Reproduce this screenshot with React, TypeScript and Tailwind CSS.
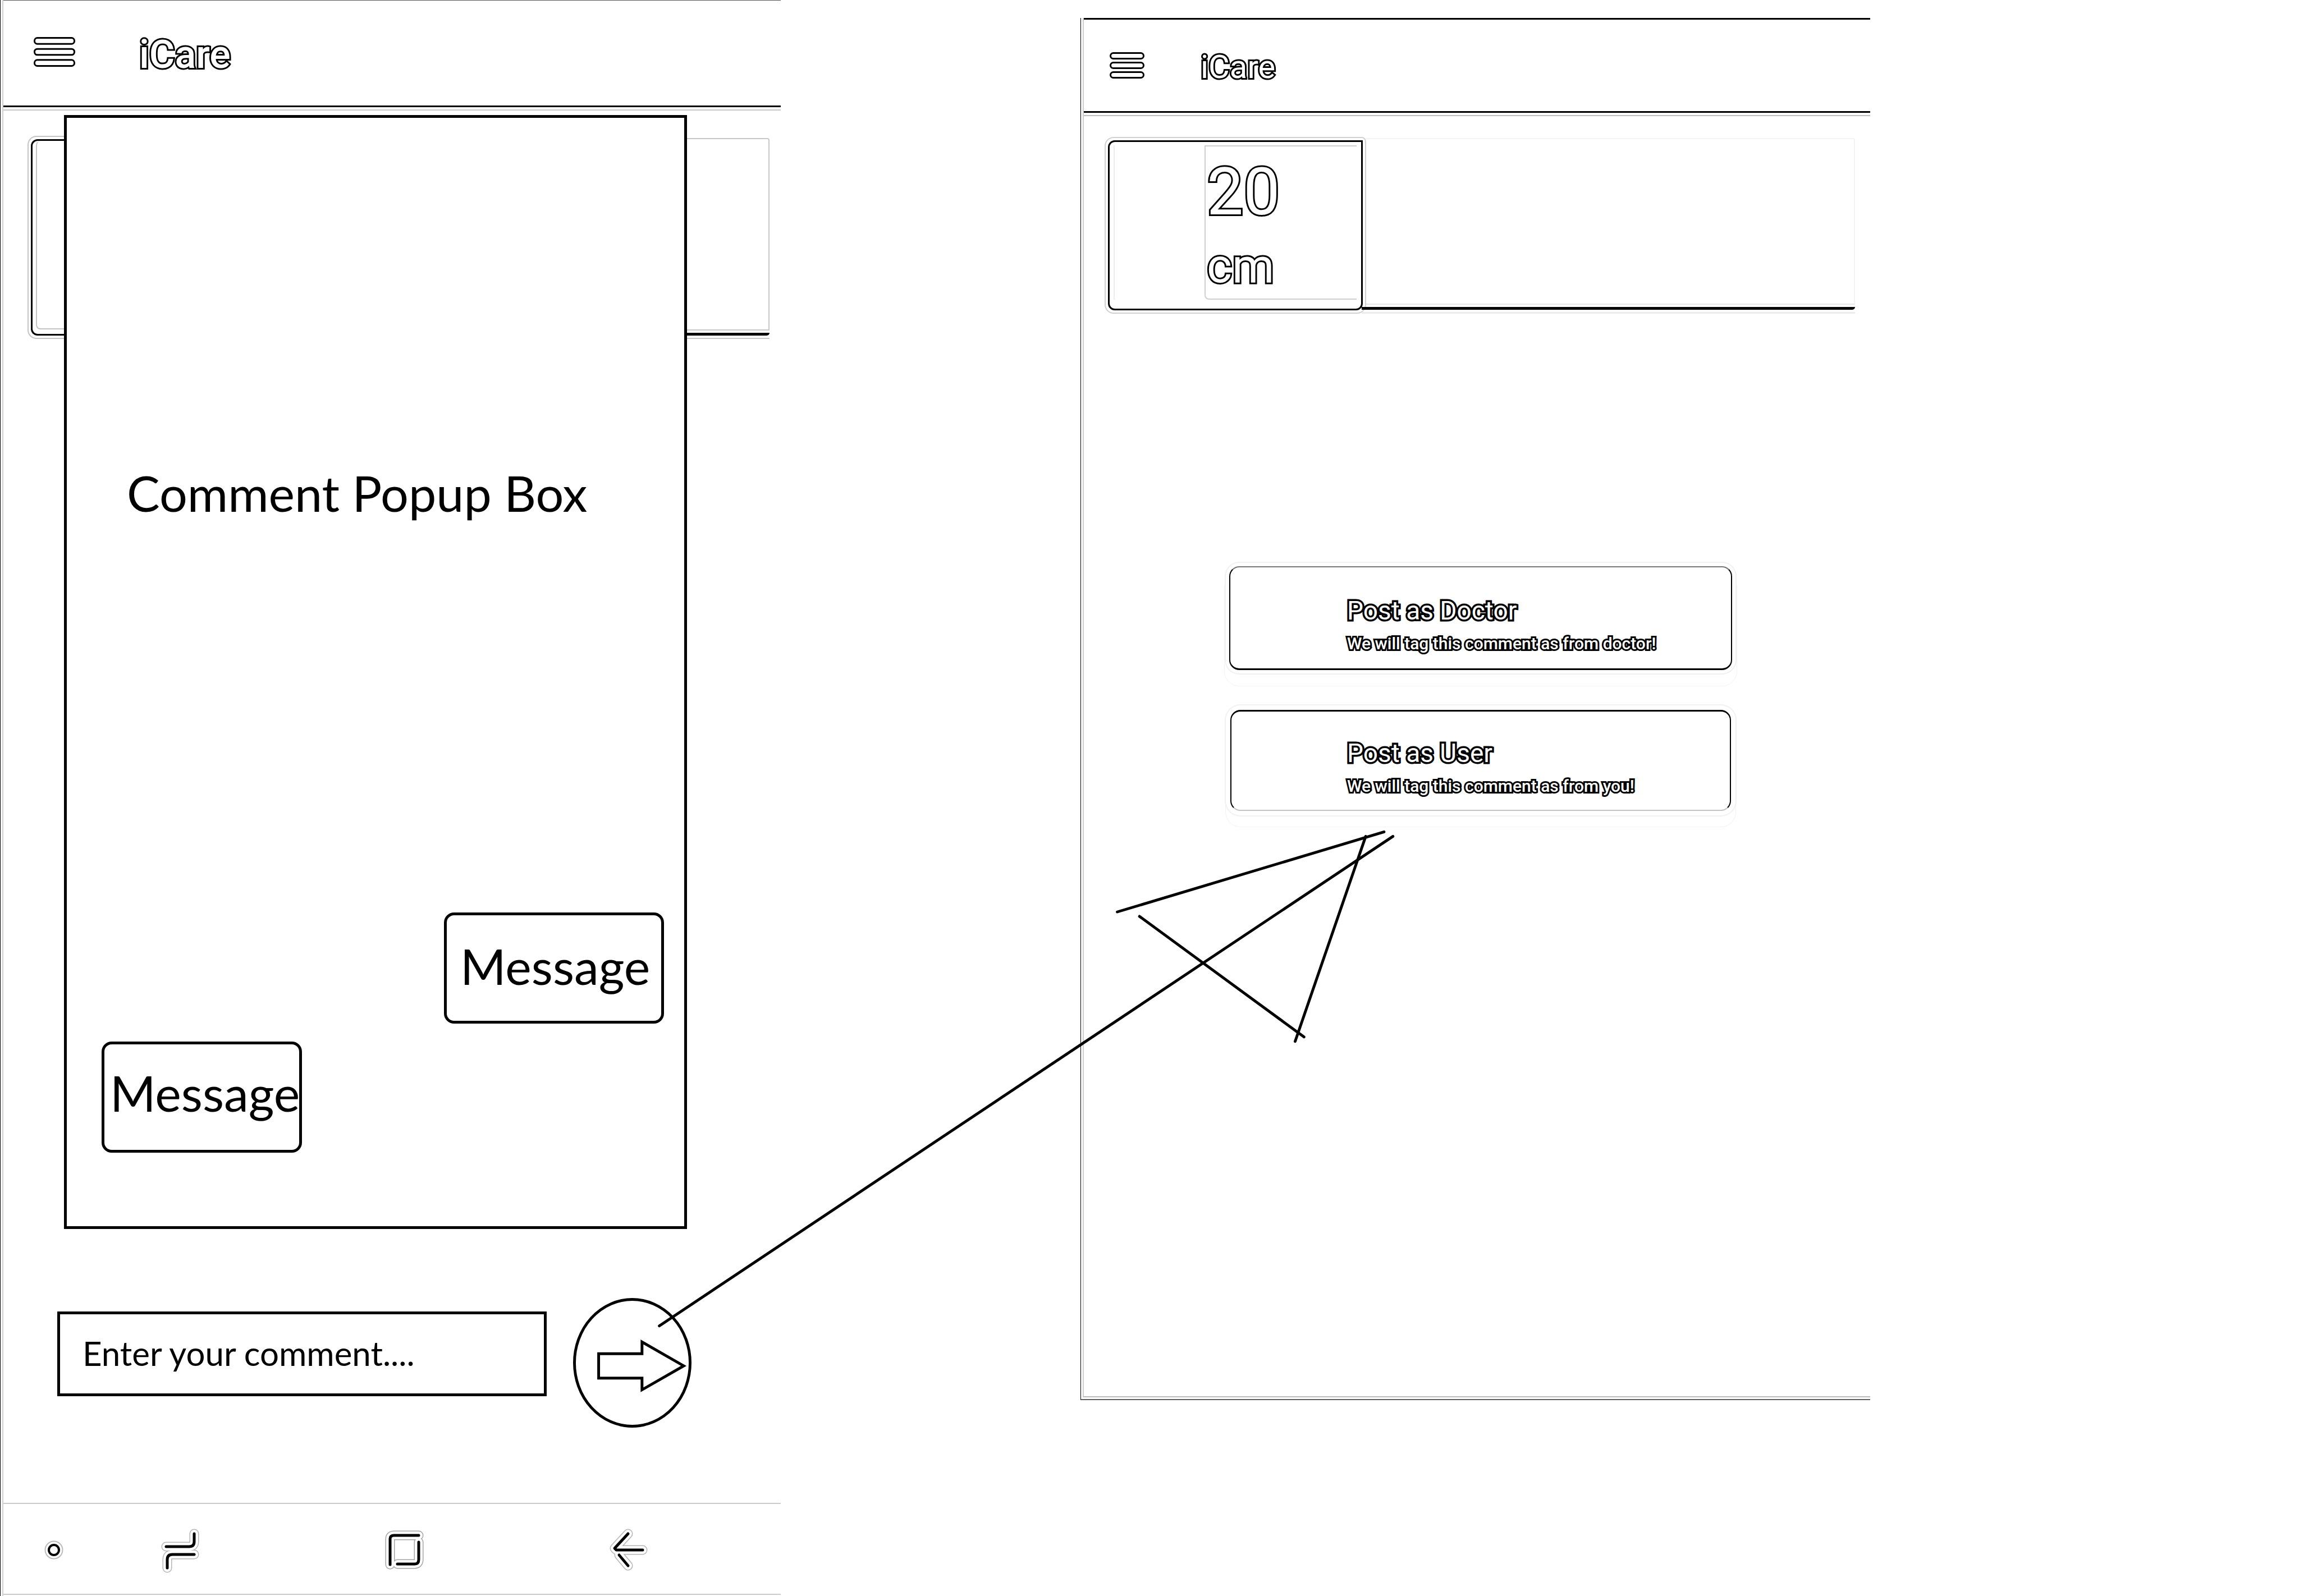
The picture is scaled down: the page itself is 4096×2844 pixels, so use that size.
import React from "react";

function Bars({ width, height, gap }: { width: number; height: number; gap: number }) {
  const bar = (height - gap * 2) / 3;
  return (
    <svg width={width} height={height} viewBox={`0 0 ${width} ${height}`} fill="none" stroke="#000" strokeWidth={3}>
      {[0, 1, 2].map((i) => (
        <rect key={i} x={1.5} y={1.5 + i * (bar + gap)} width={width - 3} height={bar - 3} rx={5} />
      ))}
    </svg>
  );
}

function RecentsIcon() {
  return (
    <svg width="72" height="84" viewBox="0 0 72 84" fill="none" strokeLinecap="round">
      <g stroke="#b5b5b5" strokeWidth="17">
        <path d="M60 13V27Q60 36 51 36H10" />
        <path d="M60 50H21Q12 50 12 59V74" />
      </g>
      <g stroke="#fff" strokeWidth="14">
        <path d="M60 13V27Q60 36 51 36H10" />
        <path d="M60 50H21Q12 50 12 59V74" />
      </g>
      <g stroke="#000" strokeWidth="5">
        <path d="M60 13V27Q60 36 51 36H10" />
        <path d="M60 50H21Q12 50 12 59V74" />
      </g>
    </svg>
  );
}

function HomeIcon() {
  return (
    <svg width="72" height="76" viewBox="0 0 72 76" fill="none" strokeLinecap="round">
      <g stroke="#a5a5a5" strokeWidth="17">
        <path d="M10 64V18Q10 12 17 12H61" />
        <path d="M61 24V55Q61 63 54 63H23" />
      </g>
      <g stroke="#fff" strokeWidth="14">
        <path d="M10 64V18Q10 12 17 12H61" />
        <path d="M61 24V55Q61 63 54 63H23" />
      </g>
      <g stroke="#000" strokeWidth="5">
        <path d="M10 64V18Q10 12 17 12H61" />
        <path d="M61 24V55Q61 63 54 63H23" />
      </g>
    </svg>
  );
}

function BackIcon() {
  return (
    <svg width="72" height="80" viewBox="0 0 72 80" fill="none" strokeLinecap="round" strokeLinejoin="round">
      <g stroke="#b5b5b5" strokeWidth="17">
        <path d="M34 11L10 37L13 40H60" />
        <path d="M18 49L34 68" />
      </g>
      <g stroke="#fff" strokeWidth="14">
        <path d="M34 11L10 37L13 40H60" />
        <path d="M18 49L34 68" />
      </g>
      <g stroke="#000" strokeWidth="5">
        <path d="M34 11L10 37L13 40H60" />
        <path d="M18 49L34 68" />
      </g>
    </svg>
  );
}

function DotIcon() {
  return (
    <svg width="34" height="34" viewBox="0 0 34 34" fill="none">
      <circle cx="17" cy="17" r="15.500" stroke="#bbb" strokeWidth="2" />
      <circle cx="17" cy="17" r="9" stroke="#000" strokeWidth="4" />
    </svg>
  );
}

function SendIcon() {
  return (
    <svg className="h-full w-full" viewBox="0 0 213 233" fill="none" stroke="#000" strokeWidth="5">
      <ellipse cx="106.500" cy="116.500" rx="104" ry="114" />
      <path d="M46 100H124V79L199 122L124 165V144H46Z" />
    </svg>
  );
}

function CommentScreen() {
  return (
    <section className="flex flex-col border-l border-black pl-[3px]">
      <div className="flex grow flex-col border-l-2 border-[#d0d0d0]">
        <header className="flex h-[191px] items-center gap-[114px] border-t border-b-3 border-t-[#555] border-b-black pl-[54px]">
          <button aria-label="Menu" className="pb-1">
            <Bars width={74} height={53} gap={6} />
          </button>
          <h1 className="pt-1 font-[Roboto,sans-serif] text-[70px] leading-[82px] font-medium text-white [-webkit-text-stroke:6px_black] [paint-order:stroke_fill]">
            iCare
          </h1>
        </header>
        <div className="mt-1 h-[2px] bg-[#c8c8c8]" />

        <main className="grid grid-cols-1">
          <div className="col-start-1 row-start-1 mt-[45px] mr-5 ml-[43px] flex h-[362px]">
            <div className="w-1/4 rounded-l-[16px] border-2 border-r-0 border-[#c4c4c4] p-[4px] pr-0">
              <div className="h-full rounded-l-[12px] border-3 border-r-0 border-black pb-[8px] pl-[6px]">
                <div className="h-full rounded-l-[8px] border-b-2 border-l-2 border-[#c4c4c4]" />
              </div>
            </div>
            <div className="flex grow flex-col gap-1 pt-1">
              <div className="grow rounded-tr-[4px] border-2 border-l-0 border-[#c8c8c8]" />
              <div className="h-[5px] rounded-br-[8px] bg-black" />
              <div className="h-[2px] bg-[#c8c8c8]" />
            </div>
          </div>

          <div
            role="dialog"
            aria-labelledby="popup-title"
            className="z-10 col-start-1 row-start-1 mt-[8px] mr-[167px] ml-[108px] flex flex-col items-start border-5 border-black bg-white pt-[616px] pb-[131px] text-[88px] leading-[104px]"
          >
            <h2 id="popup-title" className="pl-[107px]">
              Comment Popup Box
            </h2>
            <p className="mt-[696px] mr-[36px] h-[198px] w-[392px] self-end rounded-[18px] border-5 border-black pt-[38px] pl-[24px]">
              Message
            </p>
            <p className="mt-8 ml-[62px] h-[198px] w-[357px] rounded-[18px] border-5 border-black pt-[34px] pl-[10px]">
              Message
            </p>
          </div>
        </main>

        <form className="flex items-start gap-[47px] pt-[123px] pl-[96px]">
          <input
            type="text"
            aria-label="Comment"
            placeholder="Enter your comment...."
            className="mt-6 h-[151px] w-[872px] border-5 border-black bg-white pb-1 pl-[40px] text-[60px] text-black placeholder:text-black placeholder:opacity-100"
          />
          <button type="button" aria-label="Send" className="h-[231px] w-[211px]">
            <SendIcon />
          </button>
        </form>

        <nav className="mt-auto mb-[2px] flex h-[164px] items-center border-y-2 border-[#cbcbcb] pt-1 pl-[73px]">
          <button aria-label="Dot">
            <DotIcon />
          </button>
          <button aria-label="Recent apps" className="ml-[173px]">
            <RecentsIcon />
          </button>
          <button aria-label="Home" className="ml-[327px]">
            <HomeIcon />
          </button>
          <button aria-label="Back" className="ml-[328px]">
            <BackIcon />
          </button>
        </nav>
      </div>
    </section>
  );
}

function PostOption({ title, note, last }: { title: string; note: string; last?: boolean }) {
  return (
    <button
      className={
        last
          ? "mr-[2px] ml-[2px] h-[180px] rounded-[18px] border-2 border-t-3 border-black border-b-[#c4c4c4] pt-[32px] pl-[206px] text-left shadow-[0_0_0_8px_#fff,0_0_0_10px_#f1f1f1,0_20px_0_8px_#fff,0_20px_0_9px_#f3f3f3]"
          : "h-[185px] rounded-[18px] border-2 border-b-3 border-black border-t-[#777] pt-[34px] pl-[208px] text-left shadow-[0_0_0_6px_#fff,0_0_0_8px_#f1f1f1,0_20px_0_8px_#fff,0_20px_0_9px_#f3f3f3]"
      }
    >
      <span className="block text-[46px] leading-[58px] text-white [-webkit-text-stroke:7px_black] [paint-order:stroke_fill]">
        {title}
      </span>
      <span className="block text-[30px] leading-[60px] font-medium text-white [-webkit-text-stroke:6px_black] [paint-order:stroke_fill]">
        {note}
      </span>
    </button>
  );
}

function PostScreen() {
  return (
    <section className="mt-[32px] mb-[349px] flex flex-col border-b-2 border-l border-black border-b-[#606060] pb-[3px] pl-[3px] font-[Roboto,sans-serif]">
      <div className="flex grow flex-col border-b-2 border-l-2 border-[#d0d0d0] border-b-[#bbb]">
        <header className="flex h-[169px] items-center gap-[100px] border-y-3 border-black pl-[46px]">
          <button aria-label="Menu">
            <Bars width={62} height={47} gap={4} />
          </button>
          <h1 className="pt-1 text-[58px] leading-[68px] text-white [-webkit-text-stroke:6px_black] [paint-order:stroke_fill]">
            iCare
          </h1>
        </header>
        <div className="mt-1 h-[2px] bg-[#bdbdbd]" />

        <div className="mt-[37px] mr-[27px] ml-[37px] flex h-[315px]">
          <div className="w-[466px] rounded-[16px] rounded-tr-[8px] border-2 border-[#d0d0d0] p-1">
            <div className="h-full rounded-[12px] rounded-tr-none border-3 border-black pt-[6px] pr-[8px] pb-[16px] pl-[7px]">
              <div className="flex h-full border-l-2 border-[#ececec] pl-[160px]">
                <div className="grow rounded-bl-[8px] border-y-2 border-l-2 border-[#cfcfcf] pl-[2px] text-white [-webkit-text-stroke:6px_black] [paint-order:stroke_fill]">
                  <p className="mt-[12px] text-[116px] leading-[138px]">20</p>
                  <p className="mt-[10px] text-[86px] leading-[106px]">cm</p>
                </div>
              </div>
            </div>
          </div>
          <div className="-ml-2 flex grow flex-col gap-[4px] pt-[2px]">
            <div className="ml-2 grow rounded-tr-[4px] border-2 border-l-0 border-[#f3f3f3] border-b-[#e6e6e6]" />
            <div className="h-[5px] rounded-br-[8px] bg-black" />
            <div className="h-[3px] bg-[#ececec]" />
          </div>
        </div>

        <div className="mt-[450px] mr-[246px] ml-[259px] flex flex-col gap-[71px]">
          <PostOption title="Post as Doctor" note="We will tag this comment as from doctor!" />
          <PostOption title="Post as User" note="We will tag this comment as from you!" last />
        </div>
      </div>
    </section>
  );
}

export default function App() {
  return (
    <div className="relative grid min-h-screen grid-cols-[1391fr_534fr_1407fr_764fr] bg-white font-[Lato,sans-serif] text-black">
      <CommentScreen />
      <div />
      <PostScreen />
      <svg
        className="pointer-events-none absolute inset-0 z-20 h-full w-full"
        viewBox="0 0 4136 2872"
        stroke="#000"
        strokeWidth="5"
        strokeLinecap="round"
      >
        <path d="M1186 2386L2506 1505" />
        <path d="M2010 1641L2490 1497" />
        <path d="M2050 1649L2346 1866" />
        <path d="M2457 1505L2330 1874" />
      </svg>
    </div>
  );
}
